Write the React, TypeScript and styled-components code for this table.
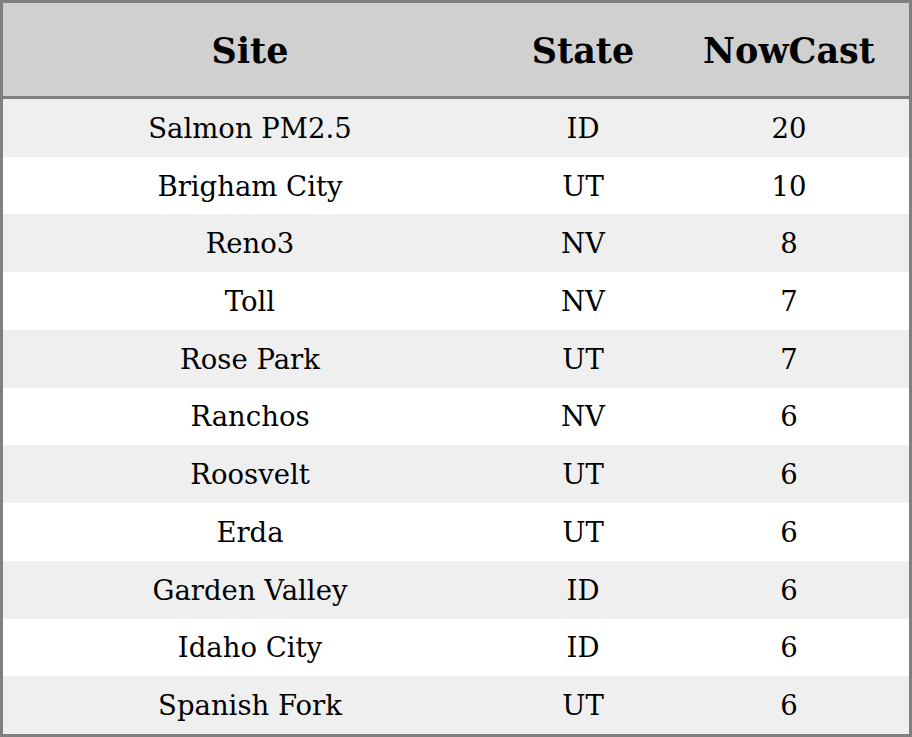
import React from "react";
import styled, { createGlobalStyle } from "styled-components";

const Global = createGlobalStyle`
  html, body { margin: 0; padding: 0; background: #ffffff; }
  body { font-family: "DejaVu Serif", serif; }
`;

const Table = styled.div`
  box-sizing: border-box;
  width: 912px;
  height: 737px;
  border: 3px solid #808080;
  display: grid;
  grid-template-columns: 494px 172px 240px;
  grid-template-rows: 96px repeat(11, 1fr);
  font-family: "DejaVu Serif", serif;
  color: #000;
`;

const HeaderCell = styled.div`
  background: #d0d0d0;
  border-bottom: 3px solid #808080;
  box-sizing: border-box;
  display: flex;
  align-items: center;
  justify-content: center;
  font-weight: bold;
  font-size: 35px;
  padding-top: 2px;
`;

const HeaderRow = styled.div`
  display: contents;
`;

const Cell = styled.div<{ $alt: boolean }>`
  background: ${(p) => (p.$alt ? "#efefef" : "#ffffff")};
  display: flex;
  align-items: center;
  justify-content: center;
  font-size: 27.5px;
`;

const rows: [string, string, string][] = [
  ["Salmon PM2.5", "ID", "20"],
  ["Brigham City", "UT", "10"],
  ["Reno3", "NV", "8"],
  ["Toll", "NV", "7"],
  ["Rose Park", "UT", "7"],
  ["Ranchos", "NV", "6"],
  ["Roosvelt", "UT", "6"],
  ["Erda", "UT", "6"],
  ["Garden Valley", "ID", "6"],
  ["Idaho City", "ID", "6"],
  ["Spanish Fork", "UT", "6"],
];

export default function App() {
  return (
    <>
      <Global />
      <Table>
        <HeaderRow>
          <HeaderCell>Site</HeaderCell>
          <HeaderCell>State</HeaderCell>
          <HeaderCell>NowCast</HeaderCell>
        </HeaderRow>
        {rows.map((r, i) =>
          r.map((v, j) => (
            <Cell key={`${i}-${j}`} $alt={i % 2 === 0}>
              {v}
            </Cell>
          ))
        )}
      </Table>
    </>
  );
}
